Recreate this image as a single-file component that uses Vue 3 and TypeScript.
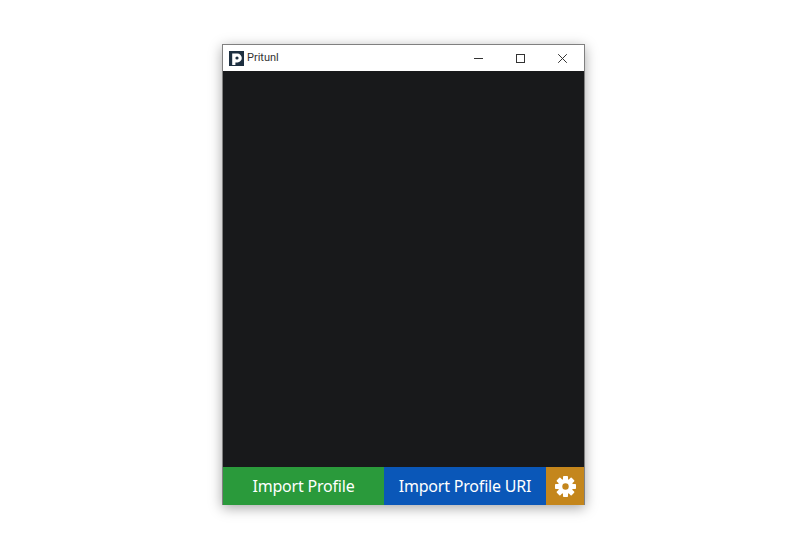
<script setup lang="ts">
const gearTeeth: number[] = [0, 45, 90, 135, 180, 225, 270, 315]
</script>

<template>
  <div class="page">
    <div class="window">
      <header class="titlebar">
        <svg class="logo" width="15" height="15" viewBox="0 0 15 15">
          <rect width="15" height="15" fill="#1d2f40" />
          <path d="M3.2 14V2.6h5.2a4.4 4.4 0 0 1 0 8.8H6.4V14z" fill="#fff" />
          <circle cx="8" cy="7" r="1.6" fill="#1d2f40" />
        </svg>
        <span class="title">Pritunl</span>
        <div class="controls">
          <button class="control">
            <svg width="9" height="9" viewBox="0 0 9 9"><path d="M0 4.5h9" stroke="#333" fill="none" /></svg>
          </button>
          <button class="control">
            <svg width="9" height="9" viewBox="0 0 9 9"><rect x="0.5" y="0.5" width="8" height="8" stroke="#333" fill="none" /></svg>
          </button>
          <button class="control">
            <svg width="9" height="9" viewBox="0 0 9 9"><path d="M0.2 0.2l8.6 8.6M8.8 0.2l-8.6 8.6" stroke="#333" fill="none" /></svg>
          </button>
        </div>
      </header>
      <main class="content"></main>
      <footer class="actions">
        <button class="action import">Import Profile</button>
        <button class="action uri">Import Profile URI</button>
        <button class="settings">
          <svg width="21" height="21" viewBox="0 0 21 21">
            <circle cx="10.5" cy="10.5" r="7.6" fill="#fff" />
            <rect
              v-for="angle in gearTeeth"
              :key="angle"
              x="8"
              y="0"
              width="5"
              height="5"
              rx="0.8"
              fill="#fff"
              :transform="`rotate(${angle} 10.5 10.5)`"
            />
            <circle cx="10.5" cy="10.5" r="3.2" fill="#c4861c" />
          </svg>
        </button>
      </footer>
    </div>
  </div>
</template>

<style>
html, body { margin: 0; background: #fff; }
</style>

<style scoped>
.page {
  width: 800px;
  height: 550px;
  box-sizing: border-box;
  padding: 44px 0 0 222px;
  background: #fff;
  overflow: hidden;
}
.window {
  width: 363px;
  height: 461px;
  box-sizing: border-box;
  border: 1px solid #808080;
  border-bottom: 0;
  display: flex;
  flex-direction: column;
  background: #18191b;
  box-shadow: 0 3px 12px rgba(0, 0, 0, 0.35);
}
.titlebar {
  height: 26px;
  flex: none;
  display: flex;
  align-items: center;
  background: #fff;
  padding-left: 6px;
}
.logo { flex: none; }
.title {
  margin-left: 3px;
  font: 11px/14px Roboto, "Noto Sans", sans-serif;
  color: #333;
}
.controls {
  margin-left: auto;
  margin-right: 1px;
  display: flex;
}
.control {
  width: 42px;
  height: 26px;
  padding: 0;
  border: 0;
  background: none;
  display: flex;
  align-items: center;
  justify-content: center;
}
.content { flex: 1; }
.actions {
  height: 38px;
  flex: none;
  display: flex;
}
.action {
  border: 0;
  padding: 0;
  color: #fff;
  font: 16px "Noto Sans", sans-serif;
  letter-spacing: -0.2px;
}
.import { width: 161px; background: #2a9a3b; }
.uri { width: 162px; background: #0a57b8; }
.settings {
  flex: 1;
  border: 0;
  padding: 0;
  background: #c4861c;
  display: flex;
  align-items: center;
  justify-content: center;
}
</style>
